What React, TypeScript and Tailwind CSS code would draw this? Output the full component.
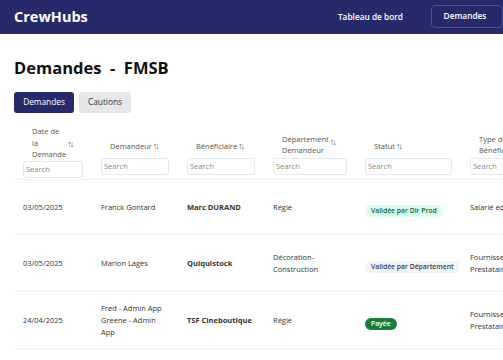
import React from "react";

const SortIcon = () => (
  <span className="ml-[1px] text-[9px] font-semibold leading-none tracking-[-2px] text-[#555]">↑↓</span>
);

const Th = ({
  children,
  w,
  gap = "mt-[5px]",
  pb = "pb-[4px]",
}: {
  children: React.ReactNode;
  w: string;
  gap?: string;
  pb?: string;
}) => (
  <th className={`${w} px-[9px] ${pb} pt-0 align-bottom text-left font-normal`}>
    <div className="pl-[9px] text-[7.5px] leading-[11.5px] text-[#555]">{children}</div>
    <div className={`${gap} h-[17px] rounded-[3px] border border-[#e5e7eb] bg-white px-[2px] text-[7.5px] leading-[15px] text-[#888]`}>
      Search
    </div>
  </th>
);

const Badge = ({ cls, children }: { cls: string; children: React.ReactNode }) => (
  <span className={`inline-block whitespace-nowrap rounded-full px-[6px] py-[1px] text-[6.8px] font-semibold leading-[10px] ${cls}`}>
    {children}
  </span>
);

const rows = [
  {
    date: "03/05/2025",
    dem: ["Franck Gontard"],
    ben: "Marc DURAND",
    dep: ["Régie"],
    statut: <Badge cls="bg-[#dcfce7] text-[#166534]">Validée par Dir Prod</Badge>,
    type: ["Salarié équipe"],
    h: "h-[55px]",
  },
  {
    date: "03/05/2025",
    dem: ["Marion Lagès"],
    ben: "Quiquistock",
    dep: ["Décoration-", "Construction"],
    statut: <Badge cls="bg-[#f3f4f6] text-[#374151]">Validée par Département</Badge>,
    type: ["Fournisseur /", "Prestataire"],
    h: "h-[57px]",
  },
  {
    date: "24/04/2025",
    dem: ["Fred - Admin App", "Greene - Admin", "App"],
    ben: "TSF Cineboutique",
    dep: ["Régie"],
    statut: <Badge cls="bg-[#15803d] text-white">Payée</Badge>,
    type: ["Fournisseur /", "Prestataire"],
    h: "h-[57px]",
  },
];

const td = "px-[9px] align-middle text-[7.5px] leading-[12px] text-[#333]";

export default function App() {
  return (
    <div
      className="h-[360px] w-[503px] overflow-hidden bg-white"
      style={{ fontFamily: '"Open Sans", "Noto Sans", sans-serif' }}
    >
      <header className="flex h-[34px] items-center justify-between bg-[#262a6b] pl-[14px]">
        <span className="text-[14.5px] font-bold text-white">CrewHubs</span>
        <div className="flex items-center">
          <span className="mr-[28px] text-[8.3px] font-semibold text-white">Tableau de bord</span>
          <span className="mt-[-1px] flex h-[23px] w-[72px] items-center justify-center rounded-[4px] border border-[#4b5090] pr-[4px] text-[8.3px] font-semibold text-white">
            Demandes
          </span>
        </div>
      </header>
      <main className="px-[14px]">
        <h1 className="mt-[23px] whitespace-pre text-[16.5px] font-bold leading-[22px] text-[#111]">
          Demandes  -  FMSB
        </h1>
        <div className="mt-[13px] flex gap-[5px]">
          <button className="h-[21px] w-[60px] rounded-[3px] bg-[#262a6b] text-[8.3px] text-white">Demandes</button>
          <button className="h-[21px] w-[52px] rounded-[3px] bg-[#e5e7eb] text-[8.3px] text-[#333]">Cautions</button>
        </div>
        <table className="mt-[12px] w-[547px] table-fixed border-collapse">
          <thead>
            <tr className="h-[54px] border-b border-[#f0f0f0]">
              <Th w="w-[78px]" gap="mt-[0px]" pb="pb-[1px]">
                <div className="flex items-center justify-between pr-[12px]">
                  <span className="w-[36px]">Date de la Demande</span>
                  <SortIcon />
                </div>
              </Th>
              <Th w="w-[86px]">
                Demandeur<SortIcon />
              </Th>
              <Th w="w-[86px]">
                Bénéficiaire<SortIcon />
              </Th>
              <Th w="w-[92px]" gap="mt-[1px]">
                <div className="flex items-start">
                  <span>
                    Département
                    <br />
                    Demandeur
                  </span>
                  <span className="mt-[3px]">
                    <SortIcon />
                  </span>
                </div>
              </Th>
              <Th w="w-[105px]">
                Statut<SortIcon />
              </Th>
              <Th w="w-[100px]" gap="mt-[1px]">
                <span className="whitespace-nowrap">
                  Type de
                  <br />
                  Bénéficiaire
                </span>
              </Th>
            </tr>
          </thead>
          <tbody>
            {rows.map((r, i) => (
              <tr key={i} className={`${r.h} border-b border-[#f0f0f0]`}>
                <td className={td}>{r.date}</td>
                <td className={td}>
                  {r.dem.map((l, j) => (
                    <div key={j}>{l}</div>
                  ))}
                </td>
                <td className={`${td} whitespace-nowrap font-bold text-[#111]`}>{r.ben}</td>
                <td className={td}>
                  {r.dep.map((l, j) => (
                    <div key={j}>{l}</div>
                  ))}
                </td>
                <td className="px-[9px] align-middle">{r.statut}</td>
                <td className={`${td} whitespace-nowrap`}>
                  {r.type.map((l, j) => (
                    <div key={j}>{l}</div>
                  ))}
                </td>
              </tr>
            ))}
          </tbody>
        </table>
      </main>
    </div>
  );
}
